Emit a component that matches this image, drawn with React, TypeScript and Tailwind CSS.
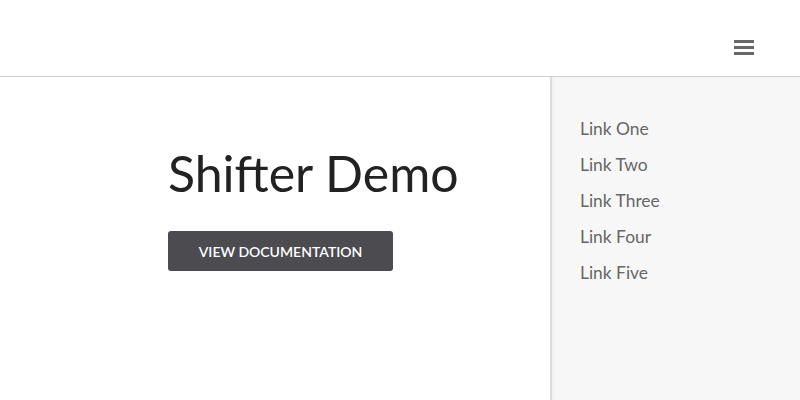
export default function App() {
  return (
    <div className="w-[800px] h-[400px] overflow-hidden bg-white flex flex-col" style={{ fontFamily: 'Lato, "Open Sans", sans-serif' }}>
      <header className="h-[77px] shrink-0 flex items-center justify-end pr-[46px] border-b border-[#d0d0d0]">
        <button className="w-5 flex flex-col gap-[3px] mt-[19px]" aria-label="menu">
          <span className="block h-[3px] bg-[#666]" />
          <span className="block h-[3px] bg-[#666]" />
          <span className="block h-[3px] bg-[#666]" />
        </button>
      </header>
      <div className="flex flex-1">
        <main className="w-[550px] pl-[168px] pt-[66px]">
          <h1 className="text-[50px] leading-[60px] text-[#222] font-normal">Shifter Demo</h1>
          <button className="mt-[28px] w-[225px] h-[40px] rounded-[3px] bg-[#4b4b50] text-white text-[14px] font-semibold">
            VIEW DOCUMENTATION
          </button>
        </main>
        <aside className="flex-1 bg-[#f7f7f7] border-l-2 border-[#dcdcdc] pl-[28px] pt-[34px] shadow-[inset_3px_0_4px_-2px_rgba(0,0,0,0.05)]">
          <nav className="flex flex-col text-[17.4px] leading-[36px] text-[#666]">
            <a>Link One</a>
            <a>Link Two</a>
            <a>Link Three</a>
            <a>Link Four</a>
            <a>Link Five</a>
          </nav>
        </aside>
      </div>
    </div>
  )
}
